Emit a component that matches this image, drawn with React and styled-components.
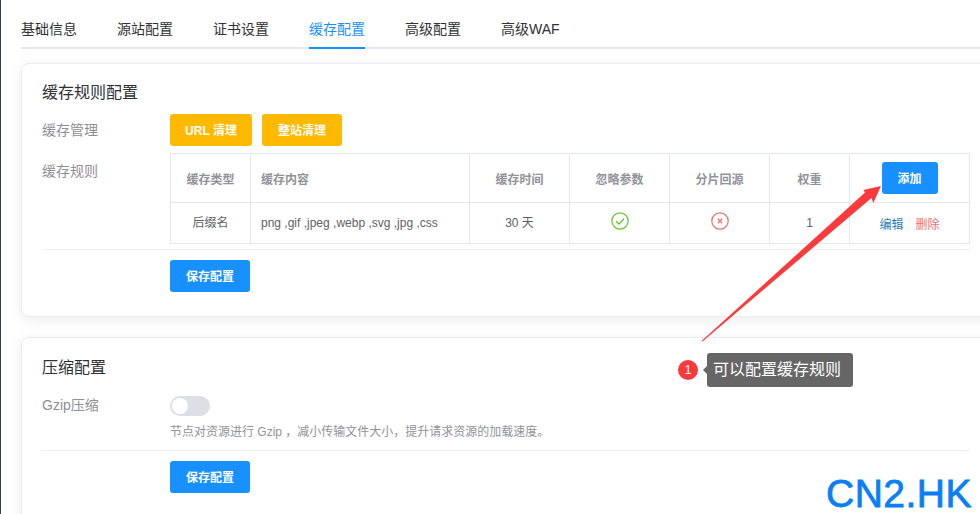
import React from "react";
import styled, { createGlobalStyle } from "styled-components";

const Global = createGlobalStyle`
  html, body { margin: 0; padding: 0; background: #fff; overflow: hidden; }
  body { font-family: "Liberation Sans", "Noto Sans CJK SC", sans-serif; }
  * { box-sizing: border-box; }
`;

const Page = styled.div`
  position: relative;
  display: flex;
  width: 980px;
  height: 514px;
  overflow: hidden;
  background: #fff;
`;
const Rail = styled.div`
  flex: none;
  width: 1px;
  background: #304156;
`;
const Main = styled.main`
  flex: none;
  width: 1020px;
  padding: 0 0 0 20px;
`;
const Tabs = styled.nav`
  display: flex;
  gap: 40px;
  height: 49px;
  padding-top: 20px;
  border-bottom: 2px solid #e4e7ed;
`;
const Tab = styled.div`
  height: 29px;
  line-height: 18px;
  font-size: 14px;
  color: ${(p) => (p.$active ? "#1890ff" : "#303133")};
  border-bottom: 2px solid ${(p) => (p.$active ? "#1890ff" : "transparent")};
`;
const Card = styled.section`
  margin-top: ${(p) => p.$top}px;
  height: ${(p) => p.$height}px;
  padding: ${(p) => p.$pad}px 20px 0;
  background: #fff;
  border: 1px solid #e9ecf4;
  border-radius: 8px;
  box-shadow: 0 3px 14px 0 rgba(0, 0, 0, 0.08);
`;
const Title = styled.h3`
  margin: 0;
  height: 18px;
  line-height: 18px;
  font-size: 16px;
  font-weight: 400;
  color: #303133;
`;
const FormRow = styled.div`
  display: flex;
  width: 928px;
  margin-top: ${(p) => p.$top || 0}px;
`;
const Label = styled.div`
  flex: none;
  width: 128px;
  padding-top: ${(p) => p.$pad}px;
  line-height: 18px;
  font-size: 14px;
  color: #8e8f96;
`;
const ButtonRow = styled.div`
  display: flex;
  gap: 10px;
`;
const Button = styled.button`
  width: ${(p) => p.$w}px;
  height: 32px;
  padding: 0 0 2px;
  border: 0;
  border-radius: 3px;
  font: bold 12px "Liberation Sans", "Noto Sans CJK SC", sans-serif;
  color: #fff;
  background: ${(p) => (p.$warn ? "#ffba00" : "#1890ff")};
`;
const Table = styled.table`
  width: 799px;
  table-layout: fixed;
  border-collapse: collapse;
  font-size: 12px;
`;
const Th = styled.th`
  height: 49px;
  padding: 0 ${(p) => (p.$left ? "10px" : "0")};
  border: 1px solid #e3e7ef;
  font-weight: bold;
  color: #909399;
  text-align: ${(p) => (p.$left ? "left" : "center")};
`;
const Td = styled.td`
  height: 41px;
  padding: 0 ${(p) => (p.$left ? "10px" : "0")} ${(p) => (p.$lift ? "3px" : "0")};
  border: 1px solid #e3e7ef;
  color: #606266;
  text-align: ${(p) => (p.$left ? "left" : "center")};
  white-space: nowrap;
`;
const LinkText = styled.span`
  font-weight: 400;
  color: ${(p) => (p.$danger ? "#f56c6c" : "#1f80b8")};
  margin-left: ${(p) => (p.$danger ? "12px" : "0")};
`;
const StatusIcon = styled.svg`
  display: block;
  width: 18px;
  height: 18px;
  margin: -4px auto 0;
`;
const Divider = styled.div`
  width: 928px;
  height: 1px;
  margin-top: ${(p) => p.$top}px;
  background: #ebeef5;
`;
const Action = styled.div`
  margin: 10px 0 0 128px;
`;
const Switch = styled.div`
  width: 40px;
  height: 20px;
  padding: 2px;
  border-radius: 10px;
  background: #dcdfe6;
`;
const Knob = styled.div`
  width: 16px;
  height: 16px;
  border-radius: 50%;
  background: #fff;
`;
const Hint = styled.p`
  margin: 8px 0 0;
  line-height: 16px;
  font-size: 12px;
  color: #909399;
`;
const Arrow = styled.svg`
  position: absolute;
  left: 0;
  top: 0;
  width: 980px;
  height: 514px;
  pointer-events: none;
`;
const Note = styled.div`
  position: absolute;
  left: 678px;
  top: 353px;
  display: flex;
  align-items: center;
  gap: 9px;
`;
const Badge = styled.div`
  width: 20px;
  height: 20px;
  border-radius: 50%;
  background: #f83a3a;
  color: #fff;
  font-size: 12px;
  line-height: 20px;
  text-align: center;
`;
const Bubble = styled.div`
  position: relative;
  width: 146px;
  height: 34px;
  padding-left: 6px;
  border-radius: 3px;
  background: #666;
  color: #fff;
  font-size: 16px;
  line-height: 34px;
  white-space: nowrap;
  &::before {
    content: "";
    position: absolute;
    left: -4px;
    top: 13px;
    border-style: solid;
    border-width: 4px 4px 4px 0;
    border-color: transparent #666 transparent transparent;
  }
`;
const Watermark = styled.div`
  position: absolute;
  left: 826px;
  top: 472px;
  font-family: "Liberation Sans", sans-serif;
  font-size: 39px;
  line-height: 44px;
  font-weight: 400;
  letter-spacing: 0.5px;
  color: #0a7ff5;
  -webkit-text-stroke: 0.8px #0a7ff5;
`;

const widths = [80, 219, 100, 100, 100, 80, 120];

export default function App() {
  return (
    <Page>
      <Global />
      <Rail />
      <Main>
        <Tabs>
          {["基础信息", "源站配置", "证书设置", "缓存配置", "高级配置", "高级WAF"].map((t) => (
            <Tab key={t} $active={t === "缓存配置"}>{t}</Tab>
          ))}
        </Tabs>
        <Card $top={14} $height={254} $pad={20}>
          <Title>缓存规则配置</Title>
          <FormRow $top={12}>
            <Label $pad={7}>缓存管理</Label>
            <ButtonRow>
              <Button $warn $w={82}>URL 清理</Button>
              <Button $warn $w={80}>整站清理</Button>
            </ButtonRow>
          </FormRow>
          <FormRow $top={7}>
            <Label $pad={9}>缓存规则</Label>
            <Table>
              <colgroup>
                {widths.map((w, i) => <col key={i} style={{ width: w }} />)}
              </colgroup>
              <thead>
                <tr>
                  <Th>缓存类型</Th>
                  <Th $left>缓存内容</Th>
                  <Th>缓存时间</Th>
                  <Th>忽略参数</Th>
                  <Th>分片回源</Th>
                  <Th>权重</Th>
                  <Th><Button $w={56}>添加</Button></Th>
                </tr>
              </thead>
              <tbody>
                <tr>
                  <Td $lift>后缀名</Td>
                  <Td $left>png ,gif ,jpeg ,webp ,svg ,jpg ,css</Td>
                  <Td $lift>30 天</Td>
                  <Td>
                    <StatusIcon viewBox="0 0 18 18" fill="none" stroke="#67c23a">
                      <circle cx="9" cy="9" r="8.2" strokeWidth="1.2" />
                      <path d="M5 9.2l3 2.8 5-5.2" strokeWidth="1.3" />
                    </StatusIcon>
                  </Td>
                  <Td>
                    <StatusIcon viewBox="0 0 18 18" fill="none" stroke="#f56c6c">
                      <circle cx="9" cy="9" r="8.2" strokeWidth="1.2" />
                      <path d="M6.8 6.8l4.4 4.4M11.2 6.8l-4.4 4.4" strokeWidth="1.3" />
                    </StatusIcon>
                  </Td>
                  <Td>1</Td>
                  <Td>
                    <LinkText>编辑</LinkText>
                    <LinkText $danger>删除</LinkText>
                  </Td>
                </tr>
              </tbody>
            </Table>
          </FormRow>
          <Divider $top={5} />
          <Action><Button $w={80}>保存配置</Button></Action>
        </Card>
        <Card $top={20} $height={260} $pad={21}>
          <Title>压缩配置</Title>
          <FormRow $top={19}>
            <Label $pad={0}>Gzip压缩</Label>
            <div>
              <Switch><Knob /></Switch>
              <Hint>节点对资源进行 Gzip ，减小传输文件大小，提升请求资源的加载速度。</Hint>
            </div>
          </FormRow>
          <Divider $top={10} />
          <Action><Button $w={80}>保存配置</Button></Action>
        </Card>
      </Main>
      <Arrow viewBox="0 0 980 514">
        <polygon points="701.5,341 865,192.5 863.3,190 881,186 873.3,203 871.5,198 702.5,341.5" fill="#fb3b3b" />
      </Arrow>
      <Note>
        <Badge>1</Badge>
        <Bubble>可以配置缓存规则</Bubble>
      </Note>
      <Watermark>CN2.HK</Watermark>
    </Page>
  );
}
